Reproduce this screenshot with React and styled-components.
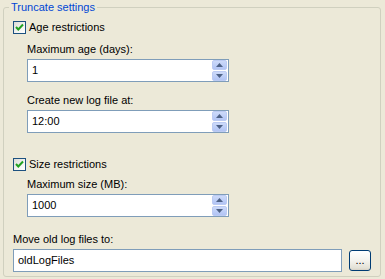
import React from "react";
import styled, { createGlobalStyle } from "styled-components";

const GlobalStyle = createGlobalStyle`
  html, body {
    margin: 0;
    padding: 0;
    background: #ece9d8;
  }
  body {
    font-family: "Liberation Sans", Arial, sans-serif;
    font-size: 11px;
    color: #000;
  }
`;

const Page = styled.div`
  width: 385px;
  height: 279px;
  padding: 7px 0 0 3px;
  box-sizing: border-box;
  background: #ece9d8;
`;

const Group = styled.div`
  position: relative;
  box-sizing: border-box;
  width: 378px;
  height: 270px;
  border: 1px solid #d0d0bf;
  border-radius: 3px;
  padding: 13px 0 0 9px;
  display: flex;
  flex-direction: column;
`;

const Legend = styled.div`
  position: absolute;
  top: -7px;
  left: 5px;
  padding: 0 2px;
  line-height: 13px;
  color: #0046d5;
  background: #ece9d8;
`;

const CheckRow = styled.label`
  display: flex;
  align-items: center;
  gap: 3px;
  height: 13px;
  line-height: 13px;
  margin-top: ${(p) => p.$top || 0}px;
`;

const CheckBox = styled.span`
  box-sizing: border-box;
  width: 13px;
  height: 13px;
  border: 1px solid #1c5180;
  background: linear-gradient(135deg, #dcdcd7 0%, #f4f4f2 60%, #ffffff 100%);
  display: flex;
  align-items: center;
  justify-content: center;
`;

const Indent = styled.div`
  display: flex;
  flex-direction: column;
  margin-left: 14px;
`;

const FieldLabel = styled.div`
  line-height: 13px;
  margin-top: ${(p) => p.$top || 0}px;
  margin-bottom: 3px;
`;

const TextBox = styled.div`
  box-sizing: border-box;
  width: ${(p) => p.$width}px;
  height: 23px;
  border: 1px solid #7f9db9;
  background: #fff;
  display: flex;
  align-items: center;
`;

const Value = styled.span`
  flex: 1;
  padding-left: 4px;
  line-height: 21px;
`;

const SpinButtons = styled.div`
  display: flex;
  flex-direction: column;
  gap: 1px;
  width: 15px;
  height: 21px;
  margin-right: 1px;
`;

const SpinButton = styled.div`
  box-sizing: border-box;
  flex: 1;
  border: 1px solid #bccbf3;
  border-radius: 2px;
  background: linear-gradient(180deg, #cddaf9 0%, #bccdf7 60%, #b2c4f4 100%);
  display: flex;
  align-items: center;
  justify-content: center;
`;

const PathRow = styled.div`
  display: flex;
  align-items: center;
  gap: 7px;
`;

const BrowseButton = styled.button`
  box-sizing: border-box;
  width: 22px;
  height: 21px;
  padding: 0;
  border: 1px solid #003c74;
  border-radius: 3px;
  background: linear-gradient(180deg, #ffffff 0%, #f4f3ee 50%, #e3e1d6 90%, #d6d0c5 100%);
  font-family: "Liberation Sans", Arial, sans-serif;
  font-size: 11px;
  line-height: 19px;
  color: #000;
  text-align: center;
`;

const Check = () => (
  <svg width="11" height="11" viewBox="0 0 11 11">
    <path d="M2 5 L4.3 7.5 L9 2.5" fill="none" stroke="#21a121" strokeWidth="2" />
  </svg>
);

const ArrowUp = () => (
  <svg width="7" height="4" viewBox="0 0 7 4">
    <path d="M0 4 L3.5 0 L7 4 Z" fill="#4d6185" />
  </svg>
);

const ArrowDown = () => (
  <svg width="7" height="4" viewBox="0 0 7 4">
    <path d="M0 0 L3.5 4 L7 0 Z" fill="#4d6185" />
  </svg>
);

const SpinBox = ({ value }) => (
  <TextBox $width={202}>
    <Value>{value}</Value>
    <SpinButtons>
      <SpinButton>
        <ArrowUp />
      </SpinButton>
      <SpinButton>
        <ArrowDown />
      </SpinButton>
    </SpinButtons>
  </TextBox>
);

export default function App() {
  return (
    <>
      <GlobalStyle />
      <Page>
        <Group>
          <Legend>Truncate settings</Legend>
          <CheckRow>
            <CheckBox>
              <Check />
            </CheckBox>
            Age restrictions
          </CheckRow>
          <Indent>
            <FieldLabel $top={9}>Maximum age (days):</FieldLabel>
            <SpinBox value="1" />
            <FieldLabel $top={12}>Create new log file at:</FieldLabel>
            <SpinBox value="12:00" />
          </Indent>
          <CheckRow $top={25}>
            <CheckBox>
              <Check />
            </CheckBox>
            Size restrictions
          </CheckRow>
          <Indent>
            <FieldLabel $top={7}>Maximum size (MB):</FieldLabel>
            <SpinBox value="1000" />
          </Indent>
          <FieldLabel $top={16}>Move old log files to:</FieldLabel>
          <PathRow>
            <TextBox $width={329}>
              <Value>oldLogFiles</Value>
            </TextBox>
            <BrowseButton>...</BrowseButton>
          </PathRow>
        </Group>
      </Page>
    </>
  );
}
